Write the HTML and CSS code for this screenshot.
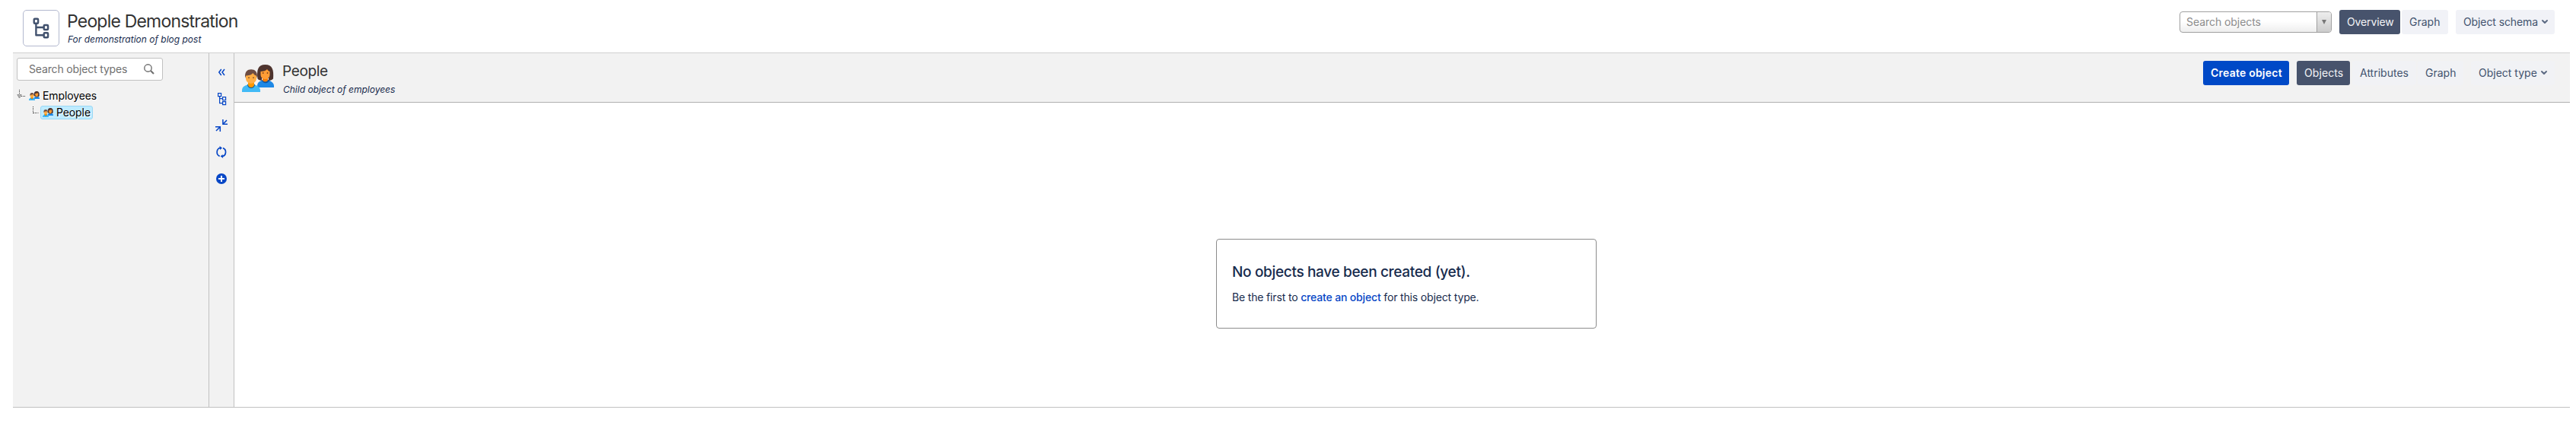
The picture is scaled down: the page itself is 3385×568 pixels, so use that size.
FILE: index.html
```html
<!DOCTYPE html>
<html lang="en">
<head>
<meta charset="utf-8">
<title>People Demonstration</title>
<link rel="stylesheet" href="styles.css">
</head>
<body>
<svg class="defs" width="0" height="0" aria-hidden="true">
  <symbol id="people" viewBox="0 0 42 36">
    <path d="M20 30v-2c0-5 4-7 9-8h4c5 1 9 4 9 8v2z" fill="#1e88e5"/>
    <path d="M26 20.500c1 5 9 5 10 0l-1.500-.8h-7z" fill="#1255a0"/>
    <path d="M27 15h7v5.500c-1 2.500-6 2.500-7 0z" fill="#f57c00"/>
    <path d="M20.500 18.500C19 7 21 0 30.500 0S42 7 41 18.500c-2 2.200-4 2.200-6 2.200v-3h-9v3c-2 0-4-.2-5.500-2.200z" fill="#4e342e"/>
    <path d="M24.500 9c4 0 7-1 8.500-3 1 1.500 2 2.500 3.500 3v4c0 8-12 8-12 0z" fill="#ff9d35"/>
    <circle cx="27.700" cy="11" r=".9" fill="#80421b"/><circle cx="33.500" cy="11" r=".9" fill="#80421b"/>
    <path d="M0 36v-2c0-5 4-7 9-8h6c5 1 9 4 9 8v2z" fill="#42baf6"/>
    <path d="M7 26.500c1 6 9 6 10 0L15.500 25h-7z" fill="#01579b"/>
    <path d="M8 21h8v6c-1 4-7 4-8 0z" fill="#ff9800"/>
    <path d="M4 15C4 9 7 6.200 12 6.200S20 9 20 15l-1 3H5z" fill="#6d4c41"/>
    <path d="M5 14.500c3 0 8-1 9.500-3.500 1 2 3 3.500 4.500 3.500V18c0 9-14 9-14 0z" fill="#ffae45"/>
    <circle cx="9" cy="17.200" r=".9" fill="#80502b"/><circle cx="15" cy="17.200" r=".9" fill="#80502b"/>
  </symbol>
  <symbol id="chevron" viewBox="0 0 10 8"><path d="M2 2l3 3 3-3" fill="none" stroke="#5e6c84" stroke-width="2" stroke-linecap="round" stroke-linejoin="round"/></symbol>
</svg>

<header class="top">
  <div class="schema-icon">
    <svg width="24" height="28" viewBox="0 0 24 28" fill="none" stroke="#42526e" stroke-width="2.400" stroke-linejoin="round" stroke-linecap="round"><rect x="2.700" y="1.700" width="5.400" height="6" rx="1"/><rect x="15.700" y="10" width="5.400" height="6" rx="1"/><rect x="15.700" y="20.200" width="5.400" height="6" rx="1"/><path d="M5.400 8.500v14.800h9.500M5.500 13h9.500"/></svg>
  </div>
  <div class="titles">
    <h1><span class="t t-title">People Demonstration</span></h1>
    <p><span class="t">For demonstration of blog post</span></p>
  </div>
  <div class="top-actions">
    <div class="select"><span class="t t-select">Search objects</span><i class="select-arrow"></i></div>
    <a class="btn dark overview"><span class="t t-overview">Overview</span></a>
    <a class="btn graph"><span class="t">Graph</span></a>
    <a class="btn schema"><span class="t t-schema">Object schema</span><svg width="10" height="8"><use href="#chevron"/></svg></a>
  </div>
</header>

<div class="workspace">
  <aside class="sidebar">
    <div class="search"><span class="t t-search">Search object types</span>
      <svg width="14" height="14" viewBox="0 0 14 14" fill="none" stroke="#707070" stroke-width="1.400"><circle cx="5.500" cy="5.500" r="4.700"/><path d="M9 9l4 4" stroke-width="2.200"/></svg>
    </div>
    <ul class="tree">
      <li class="node root"><svg class="branch" width="12" height="18" viewBox="0 0 12 18"><path d="M3.500 1v6M6 9.500h5" stroke="#333" stroke-dasharray="1 1"/><path d="M.8 7.500h5.400L3.500 12z" fill="#b5b5b5" stroke="#808080" stroke-width=".8"/></svg><svg width="14" height="12"><use href="#people"/></svg><span class="t t-emp">Employees</span></li>
      <li class="node child"><svg class="branch" width="8" height="18" viewBox="0 0 8 18"><path d="M.5 1v9M1 9.500h6.500" fill="none" stroke="#333" stroke-dasharray="1 1"/></svg><span class="selected"><svg width="14" height="12"><use href="#people"/></svg><span class="t">People</span></span></li>
    </ul>
  </aside>
  <nav class="rail">
    <svg width="18" height="18" viewBox="0 0 18 18" fill="none" stroke="#0747c6" stroke-width="1.500"><path d="M8.800 5L5.800 9l3 4M13 5l-3 4 3 4"/></svg>
    <svg width="18" height="18" viewBox="0 0 18 18" fill="none" stroke="#0747c6" stroke-width="1.200"><path d="M4.600 1.600h4v4h-4zM10.600 6.600h4v4h-4zM10.600 12.600h4v4h-4zM6.600 6v8.600h4M6.600 8.600h4"/></svg>
    <svg width="18" height="18" viewBox="0 0 18 18" fill="none" stroke="#0747c6" stroke-width="1.500"><path d="M10.900 1v6.200H17M10.900 7.200L16 2.100M1 10.700h6.300V17M7.300 10.700L2 16"/></svg>
    <svg width="18" height="18" viewBox="0 0 18 18" fill="none" stroke="#0747c6" stroke-width="1.700"><path d="M6.700 14.400A5.900 5.900 0 0 1 7.500 3.300M11 3.600a5.900 5.900 0 0 1-.8 11.100"/><path d="M6.500 1l3.500 2.400L7.200 6zM11.200 17l-3.500-2.400L10.500 12z" fill="#0747c6" stroke="none"/></svg>
    <svg width="18" height="18" viewBox="0 0 18 18"><circle cx="9" cy="9" r="7" fill="#0747c6"/><path d="M9 5v8M5 9h8" stroke="#fff" stroke-width="2"/></svg>
  </nav>
  <main class="content">
    <div class="type-bar">
      <svg class="avatar" width="42" height="36"><use href="#people"/></svg>
      <div class="type-titles">
        <h2><span class="t t-type-name">People</span></h2>
        <p><span class="t">Child object of employees</span></p>
      </div>
      <div class="type-actions">
        <a class="btn primary create"><span class="t t-create">Create object</span></a>
        <a class="btn dark objects"><span class="t t-objects">Objects</span></a>
        <a class="btn attributes"><span class="t">Attributes</span></a>
        <a class="btn type-graph"><span class="t">Graph</span></a>
        <a class="btn type"><span class="t">Object type</span><svg width="10" height="8"><use href="#chevron"/></svg></a>
      </div>
    </div>
    <div class="stage">
      <section class="empty">
        <h3><span class="t t-empty">No objects have been created (yet).</span></h3>
        <p><span class="t">Be the first to </span><a class="t t-link">create an object</a><span class="t"> for this object type.</span></p>
      </section>
    </div>
  </main>
</div>
</body>
</html>
```
FILE: styles.css
```css
* { box-sizing: border-box; }
body { margin: 0; width: 3385px; height: 568px; overflow: hidden; background: #fff; color: #172b4d; font: 14px/20px Inter, sans-serif; }
h1, h2, h3, p, ul { margin: 0; padding: 0; font-weight: 400; }
.defs { display: block; }
.t { white-space: pre; }

.top { display: flex; height: 70px; margin: 0 8px 0 17px; padding: 13px 20px 0 13px; border-bottom: 1px solid #d0d0d0; }
.schema-icon { display: flex; align-items: center; justify-content: center; width: 48px; height: 48px; border: 1px solid #b3b9cf; border-radius: 5px; }
.titles { margin-left: 10px; }
.titles h1 { height: 30px; font-size: 23px; line-height: 31px; color: #333; }
.titles p { padding-left: 1px; font-size: 12px; line-height: 18px; font-style: italic; }
.t-title { letter-spacing: -.8px; }

.top-actions { display: flex; margin-left: auto; }
.select { display: flex; width: 200px; height: 28px; margin: 2px 10px 0 0; padding-left: 8px; border: 1px solid #a0a0a0; border-radius: 4px; background: linear-gradient(#fff 45%, #eee); line-height: 26px; color: #8c8c8c; overflow: hidden; }
.select-arrow { display: flex; align-items: center; justify-content: center; width: 19px; margin-left: auto; border-left: 1px solid #a0a0a0; background: linear-gradient(#eee, #ccc); }
.select-arrow::after { content: ""; border: 3px solid transparent; border-top: 6px solid #777; border-bottom: 0; }
.t-select { letter-spacing: -.06px; }

.btn { display: flex; align-items: center; height: 32px; padding-left: 10px; border-radius: 3px; background: #f1f2f7; color: #42526e; }
.btn.dark { background: #47536c; color: #f4f5f7; }
.btn.primary { background: #0049c7; color: #fff; font-weight: 600; }
.btn svg { margin-left: auto; }
.overview { width: 80px; margin-right: 2px; }
.graph { width: 61px; margin-right: 10px; }
.schema { width: 130px; padding-right: 8px; }
.t-overview { letter-spacing: -.13px; }
.t-schema { letter-spacing: -.1px; }

.workspace { display: flex; height: 466px; margin: 0 8px 0 17px; border-bottom: 1px solid #c1c1c1; }
.sidebar { width: 258px; padding: 6px 0 0 5px; border-right: 1px solid #c1c1c1; background: #f2f2f2; }
.search { display: flex; align-items: center; justify-content: space-between; width: 192px; height: 30px; padding: 0 10px 0 15px; border: 1px solid #c1c1c1; border-radius: 3px; background: #fff; color: #707070; }
.t-search { letter-spacing: -.16px; }
.tree { padding-top: 10px; list-style: none; color: #000; text-shadow: 1px 1px 0 #fff; }
.node { display: flex; align-items: center; height: 20px; margin-bottom: 1px; }
.root .branch { margin-right: 4px; }
.root .t { margin-left: 4px; letter-spacing: -.12px; }
.child { height: 22px; padding-left: 21px; }
.selected { display: flex; align-items: center; height: 18px; width: 69px; margin-left: 2px; padding-left: 2px; border: 1px solid #99d8f5; border-radius: 3px; background: #beebff; }
.selected .t { margin-left: 4px; letter-spacing: -.1px; }

.rail { display: flex; flex-direction: column; gap: 17px; align-items: center; width: 33px; padding-top: 16px; border-right: 1px solid #c1c1c1; background: #f2f2f2; }
.content { display: flex; flex: 1; flex-direction: column; }
.type-bar { display: flex; height: 65px; padding: 10px 20px 0 10px; border-bottom: 1px solid #b0b0b0; background: #f2f2f2; }
.avatar { margin-top: 5px; }
.type-titles { margin-left: 11px; }
.type-titles h2 { height: 28px; font-size: 19px; line-height: 27px; color: #333; }
.type-titles p { padding-left: 1px; font-size: 12px; line-height: 19px; font-style: italic; }
.t-type-name { letter-spacing: -.35px; }
.type-actions { display: flex; margin-left: auto; }
.type-actions .btn:not(.dark):not(.primary) { background: #f1f2f5; }
.create { width: 113px; margin-right: 10px; }
.objects { width: 70px; margin-right: 3px; }
.attributes { width: 84px; margin-right: 2px; }
.type-graph { width: 60px; margin-right: 10px; }
.type { width: 110px; padding-right: 9px; }
.t-create { letter-spacing: .22px; }
.t-objects { letter-spacing: .1px; }

.stage { display: flex; justify-content: center; padding: 179px 0 0 11px; }
.empty { width: 500px; height: 118px; padding: 29px 20px 0; border: 1px solid #8c8c8c; border-radius: 4px; }
.empty h3 { font-size: 19px; line-height: 28px; font-weight: 500; }
.empty p { margin-top: 9px; letter-spacing: -.16px; }
.t-empty { letter-spacing: -.33px; }
.t-link { color: #0747c6; font-weight: 500; }
```
